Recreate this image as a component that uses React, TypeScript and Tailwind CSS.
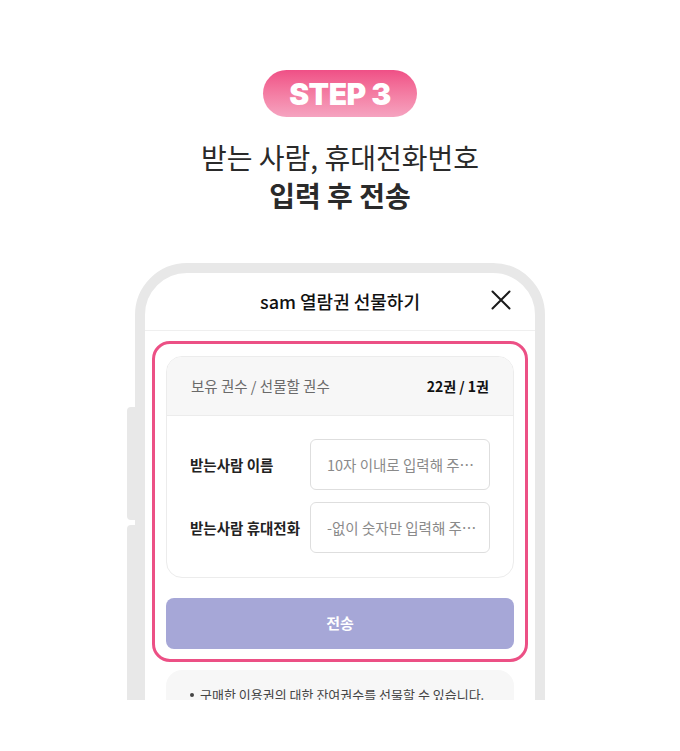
import React from "react";

const font = { fontFamily: '"Noto Sans CJK KR", "Noto Sans", sans-serif' };

const CloseIcon = () => (
  <svg width="20" height="20" viewBox="0 0 20 20" fill="none" xmlns="http://www.w3.org/2000/svg">
    <path d="M1.5 1.5L18.5 18.5M18.5 1.5L1.5 18.5" stroke="#1a1a1a" strokeWidth="2" strokeLinecap="round" />
  </svg>
);

const Row: React.FC<{ label: string; placeholder: string }> = ({ label, placeholder }) => (
  <div className="flex items-center">
    <p className="w-[120px] shrink-0 text-[14.5px] font-bold text-[#222]">{label}</p>
    <input
      className="h-[51px] w-[180px] rounded-[6px] border border-[#dedede] bg-white pl-[16px] pr-[8px] text-[14.5px] text-[#222] outline-none text-ellipsis placeholder:text-[#8a8a8a]"
      placeholder={placeholder}
      style={font}
    />
  </div>
);

export default function App() {
  return (
    <div className="min-h-[751px] w-full bg-white flex flex-col items-center pt-[70px]" style={font}>
      <div className="flex h-[47px] w-[154px] items-center justify-center rounded-full bg-gradient-to-b from-[#ef4f86] to-[#f5a3c0]">
        <span
          className="text-[30px] font-black leading-none tracking-[-0.5px] text-white"
          style={{ fontFamily: '"Inter", "Liberation Sans", sans-serif' }}
        >
          STEP 3
        </span>
      </div>

      <h1 className="mt-[21px] text-center text-[28px] leading-[38px] text-[#2a2a2a]">
        <span className="font-normal">받는 사람, 휴대전화번호</span>
        <br />
        <span className="font-bold">입력 후 전송</span>
      </h1>

      <div className="mt-[49px] h-[437px] w-[426px] overflow-hidden px-[8px]">
        <div className="relative w-[410px]">
          <div className="absolute left-[-8px] top-[144px] h-[113px] w-[12px] rounded-l-[4px] bg-[#e8e8e8]" />
          <div className="absolute left-[-8px] top-[262px] h-[300px] w-[12px] rounded-l-[4px] bg-[#e8e8e8]" />

          <div className="relative h-[560px] rounded-[52px] border-[10px] border-[#e8e8e8] bg-white">
            <div className="relative flex h-[58px] items-center justify-center border-b border-[#efefef]">
              <p className="text-[18px] font-medium text-[#111]">sam 열람권 선물하기</p>
              <button className="absolute right-[24px] top-[17px]">
                <CloseIcon />
              </button>
            </div>

            <div className="px-[7px] pt-[10px]">
              <div className="rounded-[18px] border-[3px] border-[#ec5085] px-[11px] pt-[12px] pb-[10px]">
                <div className="overflow-hidden rounded-[16px] border border-[#ececec]">
                  <div className="flex h-[59px] items-center justify-between border-b border-[#ececec] bg-[#f7f7f7] px-[24px]">
                    <p className="text-[14.5px] text-[#6a6a6a]">보유 권수 / 선물할 권수</p>
                    <p className="text-[14px] font-bold text-[#111]">22권 / 1권</p>
                  </div>
                  <div className="flex flex-col gap-[12px] px-[23px] pt-[23px] pb-[24px]">
                    <Row label="받는사람 이름" placeholder="10자 이내로 입력해 주세요" />
                    <Row label="받는사람 휴대전화" placeholder="-없이 숫자만 입력해 주세요" />
                  </div>
                </div>

                <button className="mt-[20px] flex h-[51px] w-full items-center justify-center rounded-[8px] bg-[#a6a7d7] text-[15px] font-bold text-white">
                  전송
                </button>
              </div>
            </div>

            <div className="mx-[21px] mt-[8px] rounded-[16px] bg-[#f7f7f7] px-[24px] pt-[15px] pb-[20px]">
              <p className="flex items-center gap-[6px] text-[13px] leading-[20px] tracking-[0px] text-[#444]">
                <span className="inline-block h-[4px] w-[4px] shrink-0 rounded-full bg-[#444]" />
                구매한 이용권의 대한 잔여권수를 선물할 수 있습니다.
              </p>
            </div>
          </div>
        </div>
      </div>
    </div>
  );
}
